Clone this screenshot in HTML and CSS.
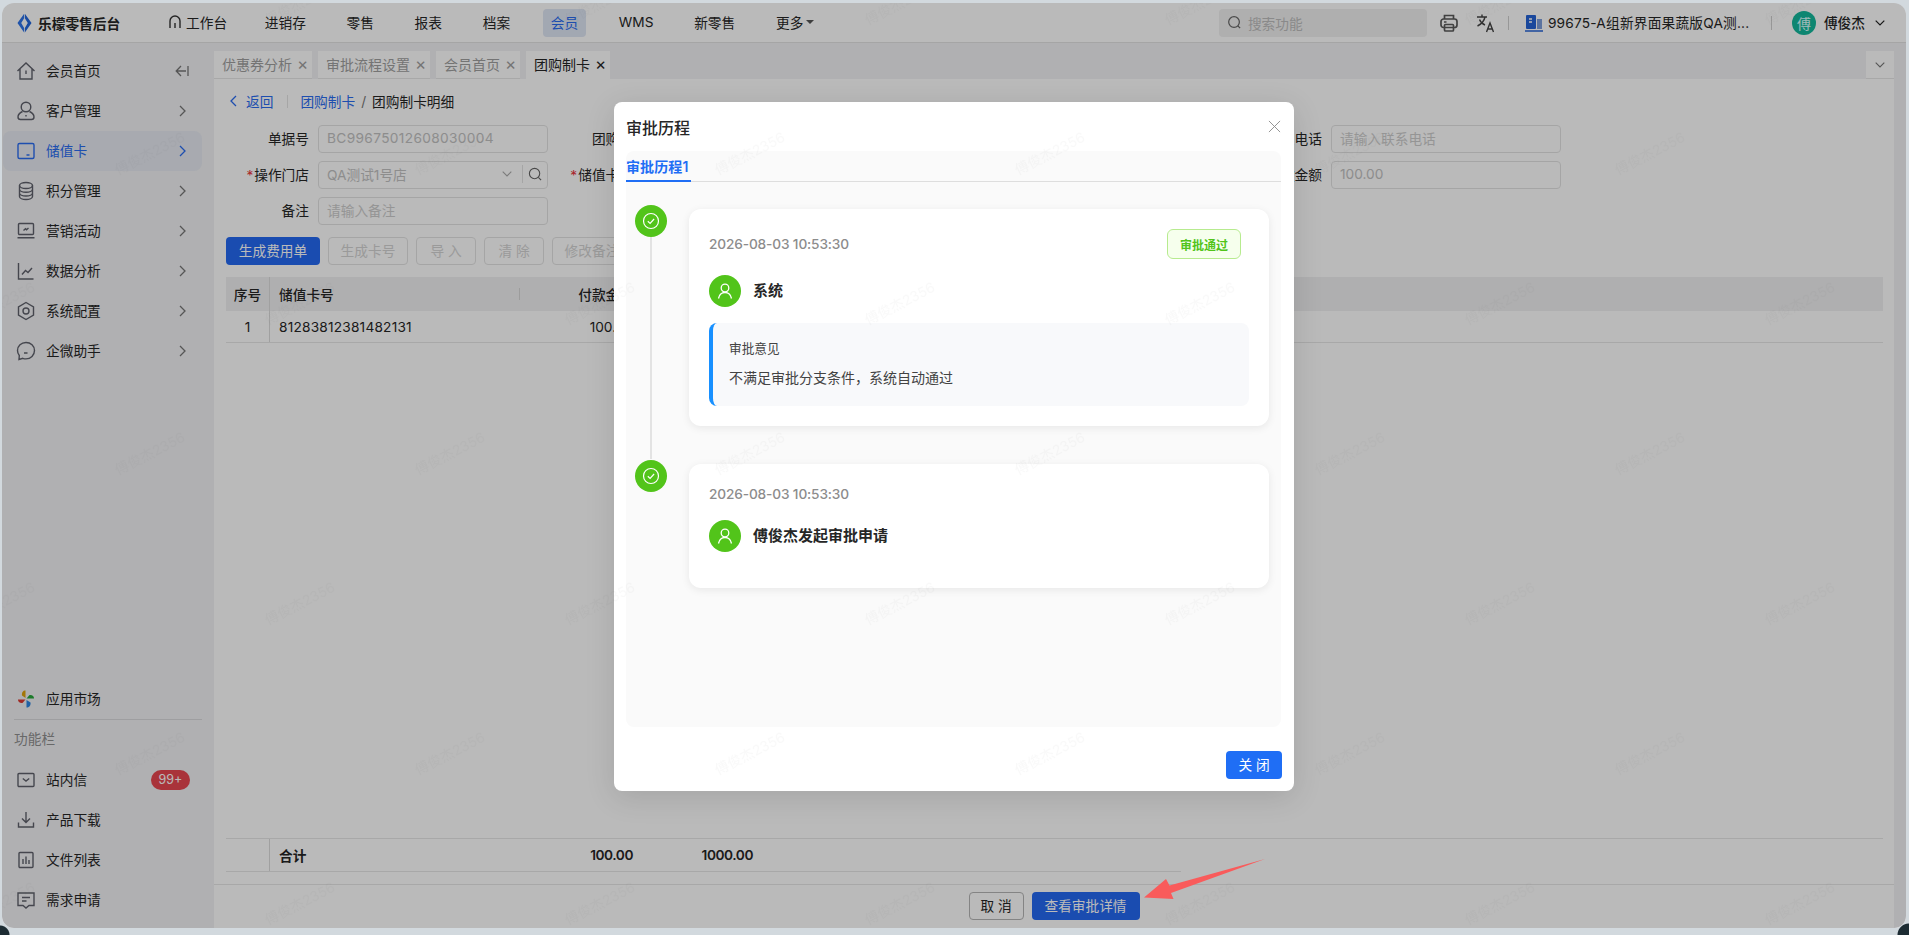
FILE: index.html
```html
<!DOCTYPE html>
<html lang="zh-CN">
<head>
    <meta charset="UTF-8">
    <meta name="viewport" content="width=device-width, initial-scale=1.0">
    <title>团购制卡明细</title>
    <link rel="stylesheet" href="styles.css">
</head>
<body>
    <div class="window">
        <header class="topbar">
            <div class="brand">
                <svg class="logo" viewBox="0 0 16 20"><path d="M7.600 0 .5 10l7.100 10v-4.800L4.500 10l3.100-5.200Z" fill="#2f74e8"/><path d="M8.400 0 15.500 10 8.400 20v-4.800L11.500 10 8.400 4.800Z" fill="#2468dc"/></svg>
                <span>乐檬零售后台</span>
            </div>
            <nav class="nav">
                <a class="nav-item nav-home"><svg class="nav-icon" viewBox="0 0 14 14"><path d="M2 13V6a5 5 0 0 1 10 0v7M7 8v5" fill="none" stroke="#333" stroke-width="1.4"/></svg>工作台</a>
                <a class="nav-item">进销存</a>
                <a class="nav-item">零售</a>
                <a class="nav-item">报表</a>
                <a class="nav-item">档案</a>
                <a class="nav-item active">会员</a>
                <a class="nav-item">WMS</a>
                <a class="nav-item">新零售</a>
                <a class="nav-item">更多<i class="caret"></i></a>
            </nav>
            <div class="top-right">
                <div class="search">
                    <svg class="search-icon" viewBox="0 0 16 16"><circle cx="7.500" cy="7.500" r="5.700" fill="none" stroke="#666" stroke-width="1.300"/><path d="m11.500 11.500 2.500 2.500" stroke="#666" stroke-width="1.300"/></svg>
                    <span>搜索功能</span>
                </div>
                <svg class="tool-icon" viewBox="0 0 20 20" fill="none" stroke="#5a5a5a" stroke-width="1.700"><path d="M5.500 6V2.500h9V6"/><rect x="2" y="6" width="16" height="8.500" rx="2.500"/><rect x="5.500" y="11.500" width="9" height="6.500" rx="1"/><path d="M5 9h2.500"/></svg>
                <svg class="tool-icon translate" viewBox="0 0 20 20" fill="none" stroke="#444" stroke-width="1.400"><path d="M1 4h10M6 1.500V4M9 4c-.8 4-3.500 7-7.500 9M3.500 6.500c1 2.500 3 4.500 5.500 5.500"/><path d="M10.500 19l3.500-9 3.500 9M11.700 16h4.600"/></svg>
                <i class="top-divider"></i>
                <svg class="org-icon" viewBox="0 0 18 18"><rect x="1" y="1" width="10" height="14" rx="1" fill="#2463d6"/><rect x="12" y="5" width="5" height="10" fill="#7d9edb"/><path d="M4 5h3M4 8h3" stroke="#fff" stroke-width="1.300"/><path d="M0 17h18" stroke="#2463d6" stroke-width="1.600"/></svg>
                <span class="org-name">99675-A组新界面果蔬版QA测...</span>
                <i class="top-divider"></i>
                <span class="avatar">傅</span>
                <span class="user-name">傅俊杰</span>
                <svg class="user-chevron" viewBox="0 0 10 6"><path d="m.7.7 4.300 4.300L9.300.7" fill="none" stroke="#222" stroke-width="1.200"/></svg>
            </div>
        </header>

        <div class="layout">
            <aside class="sidebar">
                <ul class="menu">
                    <li class="menu-item">
                        <svg class="menu-icon" viewBox="0 0 20 20"><path d="M1.500 10 10 2l8.500 8M4 8v10h12V8M10 9.500v3.500"/></svg>
                        <span class="menu-label">会员首页</span>
                        <svg class="menu-end" viewBox="0 0 14 12"><path d="M6 1 1.200 6 6 11M1.500 6H11M13 1v10"/></svg>
                    </li>
                    <li class="menu-item">
                        <svg class="menu-icon" viewBox="0 0 20 20"><circle cx="10" cy="6" r="4.800"/><path d="M6.500 10.500C3.500 12 2 14 2 16c0 1.500 1 2.500 2.500 2.500h11c1.500 0 2.500-1 2.500-2.500 0-2-1.500-4-4.500-5.500M10 14v1.500"/></svg>
                        <span class="menu-label">客户管理</span>
                        <svg class="menu-end arrow" viewBox="0 0 8 12"><path d="m1 1 5 5-5 5"/></svg>
                    </li>
                    <li class="menu-item current">
                        <svg class="menu-icon" viewBox="0 0 20 20"><rect x="2" y="2.500" width="16" height="15" rx="1.500"/><path d="M10.500 14h3"/></svg>
                        <span class="menu-label">储值卡</span>
                        <svg class="menu-end arrow" viewBox="0 0 8 12"><path d="m1 1 5 5-5 5"/></svg>
                    </li>
                    <li class="menu-item">
                        <svg class="menu-icon" viewBox="0 0 20 20"><ellipse cx="10" cy="4.500" rx="6.500" ry="3"/><path d="M3.500 4.500v11c0 1.700 3 3 6.500 3s6.500-1.300 6.500-3v-11M3.500 8.200c0 1.700 3 3 6.500 3s6.500-1.300 6.500-3M3.500 12c0 1.700 3 3 6.500 3s6.500-1.300 6.500-3"/></svg>
                        <span class="menu-label">积分管理</span>
                        <svg class="menu-end arrow" viewBox="0 0 8 12"><path d="m1 1 5 5-5 5"/></svg>
                    </li>
                    <li class="menu-item">
                        <svg class="menu-icon" viewBox="0 0 20 20"><rect x="2.500" y="2.500" width="15" height="11" rx="1"/><path d="M1.500 16.800h17M7.500 9.500l2-1.800 1 1L12.500 7"/></svg>
                        <span class="menu-label">营销活动</span>
                        <svg class="menu-end arrow" viewBox="0 0 8 12"><path d="m1 1 5 5-5 5"/></svg>
                    </li>
                    <li class="menu-item">
                        <svg class="menu-icon" viewBox="0 0 20 20"><path d="M2.500 2v16h15M6 13.500l3.500-4 2.500 2 4-4.500"/></svg>
                        <span class="menu-label">数据分析</span>
                        <svg class="menu-end arrow" viewBox="0 0 8 12"><path d="m1 1 5 5-5 5"/></svg>
                    </li>
                    <li class="menu-item">
                        <svg class="menu-icon" viewBox="0 0 20 20"><path d="M10 1.500 17.500 5.800v8.400L10 18.500l-7.500-4.300V5.800Z"/><circle cx="10" cy="10" r="3"/></svg>
                        <span class="menu-label">系统配置</span>
                        <svg class="menu-end arrow" viewBox="0 0 8 12"><path d="m1 1 5 5-5 5"/></svg>
                    </li>
                    <li class="menu-item">
                        <svg class="menu-icon" viewBox="0 0 20 20"><path d="M10 1.500c-4.700 0-8.500 3.500-8.500 8 0 2 .7 3.700 1.800 5L3 18.500l3.800-1.200c1 .4 2 .6 3.200.6 4.700 0 8.500-3.800 8.500-8.400s-3.800-8-8.500-8ZM8 12h3.500"/></svg>
                        <span class="menu-label">企微助手</span>
                        <svg class="menu-end arrow" viewBox="0 0 8 12"><path d="m1 1 5 5-5 5"/></svg>
                    </li>
                </ul>
                <ul class="menu menu-bottom">
                    <li class="menu-item">
                        <svg class="menu-icon market" viewBox="0 0 20 20"><path d="M9.500 9V1.500C7 1.500 5.500 3.500 6 6.500Z" fill="#e0a30a"/><path d="M10.500 9.500H18C18 7 16 5.500 13.500 6Z" fill="#27a83a"/><path d="M9.500 10.500H2C2 13 4 14.500 6.500 14Z" fill="#dc3a32"/><path d="M10.500 11v7.500c2.500 0 4.500-2 4-5Z" fill="#2d86e2"/></svg>
                        <span class="menu-label">应用市场</span>
                    </li>
                </ul>
                <div class="side-title">功能栏</div>
                <ul class="menu">
                    <li class="menu-item">
                        <svg class="menu-icon" viewBox="0 0 20 20"><rect x="2" y="3.500" width="16" height="13" rx="1"/><path d="m6.800 8.500 3.200 2.500 3.200-2.500"/></svg>
                        <span class="menu-label">站内信</span>
                        <span class="badge">99+</span>
                    </li>
                    <li class="menu-item">
                        <svg class="menu-icon" viewBox="0 0 20 20"><path d="M10 2v10M6 8.500l4 4 4-4M2.500 12.500v4.500h15v-4.500"/></svg>
                        <span class="menu-label">产品下载</span>
                    </li>
                    <li class="menu-item">
                        <svg class="menu-icon" viewBox="0 0 20 20"><rect x="3" y="2.500" width="14" height="15" rx="1"/><path d="M7 9v5M10 6.500V14M13 10v4"/></svg>
                        <span class="menu-label">文件列表</span>
                    </li>
                    <li class="menu-item">
                        <svg class="menu-icon" viewBox="0 0 20 20"><path d="M2 3h16v12.500h-5L10 18l-3-2.500H2ZM6 7.500h8M6 11h4.500"/></svg>
                        <span class="menu-label">需求申请</span>
                    </li>
                </ul>
            </aside>

            <main class="main">
                <div class="tabs">
                    <a class="tab">优惠券分析<i class="tab-close">×</i></a>
                    <a class="tab">审批流程设置<i class="tab-close">×</i></a>
                    <a class="tab">会员首页<i class="tab-close">×</i></a>
                    <a class="tab tab-active">团购制卡<i class="tab-close">×</i></a>
                    <a class="tab-more"><svg viewBox="0 0 10 6"><path d="m.7.7 4.300 4.300L9.300.7" fill="none" stroke="#777" stroke-width="1.100"/></svg></a>
                </div>
                <div class="page">
                    <div class="content">
                        <div class="crumbs">
                            <svg class="back-icon" viewBox="0 0 7 12"><path d="M6 1 1 6l5 5" fill="none" stroke="#2a6cf0" stroke-width="1.300"/></svg>
                            <a class="link">返回</a>
                            <i class="crumb-line"></i>
                            <a class="link">团购制卡</a>
                            <span class="crumb-sep">/</span>
                            <span>团购制卡明细</span>
                        </div>

                        <div class="form-grid">
                            <div class="field"><label>单据号</label><div class="input input-code">BC99675012608030004</div></div>
                            <div class="field"><label>团购单位</label><div class="input"></div></div>
                            <div class="field"></div>
                            <div class="field"><label>联系电话</label><div class="input placeholder">请输入联系电话</div></div>
                            <div class="field"><label><b>*</b>操作门店</label><div class="input input-select">QA测试1号店
                                <svg class="select-arrow" viewBox="0 0 10 6"><path d="m.7.7 4.300 4.300L9.300.7" fill="none" stroke="#aaa" stroke-width="1.100"/></svg>
                                <span class="select-search"><svg viewBox="0 0 16 16"><circle cx="7" cy="7" r="5.500" fill="none" stroke="#666" stroke-width="1.200"/><path d="m11 11 3 3" stroke="#666" stroke-width="1.200"/></svg></span>
                            </div></div>
                            <div class="field"><label><b>*</b>储值卡类型</label><div class="input"></div></div>
                            <div class="field"></div>
                            <div class="field"><label>付款金额</label><div class="input">100.00</div></div>
                            <div class="field"><label>备注</label><div class="input placeholder">请输入备注</div></div>
                        </div>

                        <div class="toolbar">
                            <button class="btn btn-primary">生成费用单</button>
                            <button class="btn btn-off">生成卡号</button>
                            <button class="btn btn-off btn-short">导 入</button>
                            <button class="btn btn-off btn-short">清 除</button>
                            <button class="btn btn-off">修改备注</button>
                        </div>

                        <div class="grid-row grid-head">
                            <div class="cell cell-no">序号</div>
                            <div class="cell cell-line">储值卡号</div>
                            <div class="cell cell-num">付款金额</div>
                            <div class="cell cell-num">制卡金额</div>
                        </div>
                        <div class="grid-row grid-body">
                            <div class="cell cell-no">1</div>
                            <div class="cell cell-code">81283812381482131</div>
                            <div class="cell cell-num">100.00</div>
                            <div class="cell cell-num">1000.00</div>
                        </div>

                        <div class="summary">
                            <div class="grid-row summary-row">
                                <div class="cell cell-no"></div>
                                <div class="cell">合计</div>
                                <div class="cell cell-num">100.00</div>
                                <div class="cell cell-num">1000.00</div>
                            </div>
                        </div>
                    </div>
                    <footer class="page-foot">
                        <button class="btn btn-plain">取 消</button>
                        <button class="btn btn-primary btn-detail">查看审批详情</button>
                    </footer>
                </div>
            </main>
        </div>

        <div class="mask"></div>

        <section class="modal">
            <div class="modal-head">
                <span class="modal-title">审批历程</span>
                <svg class="modal-close" viewBox="0 0 14 14"><path d="m1 1 12 12M13 1 1 13" stroke="#8c8c8c" stroke-width="1"/></svg>
            </div>
            <div class="modal-body">
                <div class="flow-tabs"><span class="flow-tab">审批历程1</span></div>
                <div class="flow">
                    <div class="flow-item">
                        <div class="flow-node">
                            <span class="dot"><svg viewBox="0 0 18 18" fill="none" stroke="#fff" stroke-width="1.200"><circle cx="9" cy="9" r="7.500"/><path d="m5.800 9.200 2.300 2.200 4-4.400"/></svg></span>
                            <i class="flow-line"></i>
                        </div>
                        <div class="flow-card">
                            <div class="card-head">
                                <span class="card-time">2026-08-03 10:53:30</span>
                                <span class="tag-pass">审批通过</span>
                            </div>
                            <div class="card-user">
                                <span class="user-dot"><svg viewBox="0 0 18 18" fill="none" stroke="#fff" stroke-width="1.300"><circle cx="9" cy="6" r="3.800"/><path d="M2.500 16.500c.7-3.500 3-6 6.500-6s5.800 2.500 6.500 6"/></svg></span>
                                <span class="card-name">系统</span>
                            </div>
                            <div class="comment">
                                <div class="comment-title">审批意见</div>
                                <div class="comment-text">不满足审批分支条件，系统自动通过</div>
                            </div>
                        </div>
                    </div>
                    <div class="flow-item">
                        <div class="flow-node">
                            <span class="dot"><svg viewBox="0 0 18 18" fill="none" stroke="#fff" stroke-width="1.200"><circle cx="9" cy="9" r="7.500"/><path d="m5.800 9.200 2.300 2.200 4-4.400"/></svg></span>
                        </div>
                        <div class="flow-card">
                            <div class="card-head card-head-plain">
                                <span class="card-time">2026-08-03 10:53:30</span>
                            </div>
                            <div class="card-user">
                                <span class="user-dot"><svg viewBox="0 0 18 18" fill="none" stroke="#fff" stroke-width="1.300"><circle cx="9" cy="6" r="3.800"/><path d="M2.500 16.500c.7-3.500 3-6 6.500-6s5.800 2.500 6.500 6"/></svg></span>
                                <span class="card-name">傅俊杰发起审批申请</span>
                            </div>
                        </div>
                    </div>
                </div>
            </div>
            <div class="modal-foot">
                <button class="btn btn-close">关 闭</button>
            </div>
        </section>

        <svg class="watermark">
            <defs>
                <pattern id="wm" x="75" y="80" width="300" height="300" patternUnits="userSpaceOnUse">
                    <text x="75" y="75" text-anchor="middle" transform="rotate(-27 75 75)">傅俊杰2356</text>
                    <text x="225" y="225" text-anchor="middle" transform="rotate(-27 225 225)">傅俊杰2356</text>
                </pattern>
            </defs>
            <rect width="100%" height="100%" fill="url(#wm)"/>
        </svg>
    </div>

    <svg class="pointer" viewBox="0 0 125 42"><path d="M2 39.500 24 21l3.500 6.500L123 1 29 35l2.500 6Z" fill="#f95b5b"/></svg>
</body>
</html>
```

FILE: styles.css
```css
* {
    box-sizing: border-box;
}
html, body {
    margin: 0;
    height: 100%;
}
body {
    position: relative;
    padding: 3px 3px 7px 2px;
    overflow: hidden;
    font-family: Inter, "Noto Sans CJK SC", sans-serif;
    font-size: 13.7px;
    color: #262626;
    background:
        radial-gradient(circle at 0 100%, #1d2c33 9px, transparent 10px),
        radial-gradient(circle at 100% 100%, #1d2c33 11px, transparent 12px),
        #d2d9de;
}
ul {
    list-style: none;
    margin: 0;
    padding: 0;
}
a {
    display: inline-flex;
    align-items: center;
}
i {
    font-style: normal;
}
button {
    font-family: inherit;
}

/* window */
.window {
    position: relative;
    height: 100%;
    display: flex;
    flex-direction: column;
    overflow: hidden;
    border-radius: 12px;
    background: #fff;
}
.mask {
    position: absolute;
    inset: 0;
    background: rgba(0, 0, 0, 0.27);
}

/* top bar */
.topbar {
    height: 40px;
    flex: none;
    display: flex;
    align-items: center;
    padding: 0 21px 0 15px;
    border-bottom: 1px solid #e2e2e2;
}
.brand {
    display: flex;
    align-items: center;
    gap: 6px;
    font-weight: 600;
    width: 143px;
}
.logo {
    width: 15px;
    height: 20px;
}
.nav {
    display: flex;
    gap: 24.7px;
}
.nav-item {
    height: 28px;
    padding: 0 8px 2px;
    border-radius: 4px;
}
.nav-home {
    margin-right: -3px;
}
.nav-icon {
    width: 14px;
    height: 14px;
    margin-right: 4px;
}
.nav-item.active {
    color: #2a6cf0;
    background: #dfe6f4;
}
.caret {
    margin-left: 3px;
    border: 4px solid transparent;
    border-top-color: #555;
    border-bottom: 0;
}
.top-right {
    margin-left: auto;
    display: flex;
    align-items: center;
}
.search {
    width: 208px;
    height: 28px;
    display: flex;
    align-items: center;
    gap: 6px;
    padding-left: 8px;
    background: #f0f0f0;
    border-radius: 4px;
    color: #bdbdbd;
}
.search-icon {
    width: 15px;
    height: 15px;
}
.tool-icon {
    width: 20px;
    height: 20px;
    margin-left: 12px;
}
.translate {
    margin-left: 17px;
}
.top-divider {
    width: 1px;
    height: 14px;
    background: #cfcfcf;
    margin-left: 12px;
}
.org-icon {
    width: 18px;
    height: 18px;
    margin-left: 16px;
}
.org-name {
    margin-left: 5px;
    width: 211px;
    padding-bottom: 1px;
    white-space: nowrap;
    letter-spacing: 0.2px;
}
.avatar {
    width: 24px;
    height: 24px;
    margin-left: 20px;
    border-radius: 50%;
    background: #14b89c;
    color: #dff;
    font-size: 14px;
    display: flex;
    align-items: center;
    justify-content: center;
}
.user-name {
    margin-left: 8px;
    padding-bottom: 1px;
    font-weight: 500;
}
.user-chevron {
    width: 10px;
    height: 6px;
    flex: none;
    margin-left: 10px;
}

/* sidebar */
.layout {
    flex: 1;
    display: flex;
    min-height: 0;
}
.sidebar {
    width: 212px;
    flex: none;
    display: flex;
    flex-direction: column;
    padding: 8px 12px 8px 1px;
    background: #f1f1f4;
}
.menu-item {
    height: 40px;
    display: flex;
    align-items: center;
    padding-left: 13px;
    border-radius: 8px;
}
.menu-icon {
    width: 20px;
    height: 20px;
    flex: none;
    margin-right: 10px;
    fill: none;
    stroke: #5f616b;
    stroke-width: 1.4;
}
.market {
    stroke: none;
}
.menu-label {
    flex: 1;
    padding-bottom: 2px;
}
.menu-end {
    width: 14px;
    height: 12px;
    margin-right: 13px;
    fill: none;
    stroke: #777;
    stroke-width: 1.3;
}
.arrow {
    width: 8px;
    margin-right: 15px;
}
.current {
    background: #e6eaf1;
    color: #2a6cf0;
}
.current .menu-icon,
.current .menu-end {
    stroke: #2a6cf0;
}
.menu-bottom {
    margin-top: auto;
}
.side-title {
    height: 41px;
    margin-left: 11px;
    padding-top: 9px;
    line-height: 20px;
    color: #8f8f8f;
    border-top: 1px solid #d9d9dc;
}
.badge {
    width: 39px;
    height: 20px;
    margin-right: 12px;
    border-radius: 10px;
    background: #e84750;
    color: #fff;
    font-size: 12.5px;
    text-align: center;
    line-height: 20px;
}

/* tabs */
.main {
    flex: 1;
    min-width: 0;
    display: flex;
    flex-direction: column;
    background: #f1f1f4;
}
.tabs {
    height: 36px;
    flex: none;
    display: flex;
    gap: 6px;
    padding-top: 8px;
}
.tab {
    height: 28px;
    padding: 0 5px 2px 8px;
    background: #fff;
    border-bottom: 1px solid #e6e6e6;
    color: #a0a0a0;
    font-size: 14px;
}
.tab-close {
    width: 10px;
    margin-left: 5px;
    font-size: 17px;
    text-align: center;
}
.tab-active {
    color: #262626;
    border-bottom: 0;
}
.tab-more {
    margin-left: auto;
    margin-right: 12px;
    width: 28px;
    height: 28px;
    background: #fff;
    border-bottom: 1px solid #e6e6e6;
    justify-content: center;
}
.tab-more svg {
    width: 10px;
    height: 6px;
}

/* page */
.page {
    flex: 1;
    min-height: 0;
    display: flex;
    flex-direction: column;
    margin-right: 12px;
    background: #fff;
}
.content {
    flex: 1;
    min-height: 0;
    display: flex;
    flex-direction: column;
    padding: 13px 11px 12px 12px;
}
.crumbs {
    height: 20px;
    display: flex;
    align-items: center;
    padding-bottom: 2px;
}
.back-icon {
    width: 7px;
    height: 12px;
    margin-left: 4px;
    margin-right: 9px;
}
.link {
    color: #2a6cf0;
}
.crumb-line {
    width: 1px;
    height: 13px;
    background: #e4e4e4;
    margin: 0 12px 0 14px;
}
.crumb-sep {
    margin: 0 6px;
    color: #777;
}
.form-grid {
    margin-top: 13px;
    display: grid;
    grid-template-columns: repeat(4, 337.67px);
    row-gap: 8px;
}
.field {
    display: flex;
    align-items: center;
    gap: 9px;
    height: 28px;
}
.field label {
    width: 83px;
    flex: none;
    padding-bottom: 2px;
    text-align: right;
    white-space: nowrap;
}
.field label b {
    margin-right: 1px;
    color: #e8343c;
    font-weight: 400;
}
.input {
    width: 230px;
    height: 28px;
    display: flex;
    align-items: center;
    padding: 0 8px 2px;
    border: 1px solid #e2e2e2;
    border-radius: 4px;
    color: #c2c2c2;
}
.input-code {
    letter-spacing: 0.35px;
}
.placeholder {
    color: #cdcdcd;
}
.input-select {
    padding-right: 0;
}
.select-arrow {
    width: 10px;
    height: 6px;
    margin-left: auto;
    margin-right: 10px;
}
.select-search {
    width: 25px;
    height: 18px;
    display: flex;
    align-items: center;
    justify-content: center;
    border-left: 1px solid #e2e2e2;
}
.select-search svg {
    width: 15px;
    height: 15px;
}
.toolbar {
    margin-top: 12px;
    display: flex;
    gap: 8px;
}
.btn {
    height: 28px;
    padding: 0 0 2px;
    font-size: 13.7px;
    border: 1px solid transparent;
    border-radius: 4px;
    background: none;
    cursor: pointer;
}
.btn-primary {
    width: 94px;
    color: #fff;
    background: #2469f2;
}
.btn-off {
    width: 80px;
    color: #d3d3d3;
    border-color: #e2e2e2;
}
.btn-short {
    width: 60px;
}
.btn-plain {
    width: 55px;
    color: #262626;
    border-color: #b5b5b5;
}
.btn-detail {
    width: 108px;
}

/* table */
.grid-row {
    display: grid;
    grid-template-columns: 44px 250px 121px 120px 1fr;
    align-items: center;
}
.grid-head {
    height: 34px;
    margin-top: 12px;
    background: #f0f0f1;
    font-weight: 500;
}
.grid-head .cell {
    height: 34px;
}
.grid-body {
    height: 32px;
    border-bottom: 1px solid #e6e6e6;
}
.grid-body .cell {
    height: 31px;
}
.cell {
    display: flex;
    align-items: center;
    padding: 0 8px 0 9px;
    white-space: nowrap;
}
.cell-code {
    letter-spacing: 0.2px;
}
.cell-no {
    justify-content: center;
    padding: 0;
    border-right: 1px solid #dcdcdc;
}
.cell-num {
    justify-content: flex-end;
    padding: 0 8px 0 0;
}
.cell-line {
    position: relative;
}
.cell-line::after {
    content: "";
    position: absolute;
    right: 0;
    top: 11px;
    width: 1px;
    height: 12px;
    background: #d6d6d6;
}
.summary {
    margin-top: auto;
    border-top: 1px solid #e6e6e6;
}
.summary-row {
    width: 955px;
    height: 33px;
    border-bottom: 1px solid #e6e6e6;
    font-weight: 600;
}
.summary-row .cell {
    height: 32px;
    padding-bottom: 1px;
}
.summary-row .cell-num {
    letter-spacing: -0.45px;
}
.page-foot {
    height: 44px;
    flex: none;
    display: flex;
    justify-content: center;
    align-items: center;
    gap: 8px;
    padding-bottom: 2px;
    border-top: 1px solid #e6e6e6;
}

/* modal */
.modal {
    position: absolute;
    left: 612px;
    top: 99px;
    width: 680px;
    height: 689px;
    display: flex;
    flex-direction: column;
    background: #fff;
    border-radius: 8px;
    box-shadow: 0 6px 30px rgba(0, 0, 0, 0.12);
}
.modal-head {
    height: 49px;
    flex: none;
    display: flex;
    align-items: center;
    justify-content: space-between;
    padding: 0 13px 0 12px;
}
.modal-title {
    font-size: 16px;
    font-weight: 500;
}
.modal-close {
    width: 13px;
    height: 13px;
}
.modal-body {
    flex: 1;
    min-height: 0;
    margin: 0 13px 0 12px;
    background: #fafafa;
    border-radius: 8px;
}
.flow-tabs {
    height: 31px;
    border-bottom: 1px solid #dedede;
}
.flow-tab {
    display: inline-block;
    width: 65px;
    height: 31px;
    line-height: 31px;
    font-size: 14px;
    letter-spacing: 0.1px;
    color: #1f6ef5;
    font-weight: 600;
    border-bottom: 2px solid #1f6ef5;
}
.flow {
    padding: 27px 12px 0 9px;
}
.flow-item {
    display: flex;
    gap: 22px;
    margin-bottom: 38px;
}
.flow-node {
    width: 32px;
    flex: none;
    margin: -4px 0 -33px;
    display: flex;
    flex-direction: column;
    align-items: center;
}
.dot,
.user-dot {
    width: 32px;
    height: 32px;
    flex: none;
    display: flex;
    align-items: center;
    justify-content: center;
    border-radius: 50%;
    background: #52c41a;
}
.dot svg,
.user-dot svg {
    width: 18px;
    height: 18px;
}
.flow-line {
    flex: 1;
    width: 2px;
    background: #e3e3e3;
}
.flow-card {
    flex: 1;
    padding: 20px;
    background: #fff;
    border-radius: 12px;
    box-shadow: 0 2px 8px rgba(0, 0, 0, 0.08);
}
.card-head {
    height: 30px;
    display: flex;
    align-items: center;
    justify-content: space-between;
}
.card-head-plain {
    height: 20px;
}
.card-time {
    color: #8c8c8c;
    font-weight: 500;
    letter-spacing: -0.15px;
}
.tag-pass {
    width: 74px;
    height: 30px;
    margin-right: 8px;
    display: flex;
    align-items: center;
    justify-content: center;
    font-size: 12px;
    font-weight: 600;
    color: #52c41a;
    background: #f6ffed;
    border: 1px solid #b7eb8f;
    border-radius: 6px;
}
.card-user {
    display: flex;
    align-items: center;
    gap: 12px;
    margin: 16px 0;
}
.card-name {
    padding-bottom: 3px;
    font-size: 15px;
    font-weight: 600;
}
.comment {
    padding: 16px 16px 17px;
    background: #f8f9fb;
    border-left: 4px solid #1890ff;
    border-radius: 8px;
}
.comment-title {
    font-size: 12.7px;
    line-height: 20px;
    color: #434343;
}
.comment-text {
    margin-top: 8px;
    font-size: 14px;
    line-height: 22px;
    color: #434343;
}
.modal-foot {
    height: 64px;
    flex: none;
    display: flex;
    justify-content: flex-end;
    padding: 24px 12px 0 0;
}
.btn-close {
    width: 56px;
    color: #fff;
    background: #1f6ef5;
}

/* overlays */
.watermark {
    position: absolute;
    inset: 0;
    width: 100%;
    height: 100%;
    pointer-events: none;
}
.watermark text {
    font-family: Inter, "Noto Sans CJK SC", sans-serif;
    font-size: 14px;
    fill: rgba(0, 0, 0, 0.025);
}
.pointer {
    position: absolute;
    left: 1142px;
    top: 858px;
    width: 125px;
    height: 42px;
}
```
